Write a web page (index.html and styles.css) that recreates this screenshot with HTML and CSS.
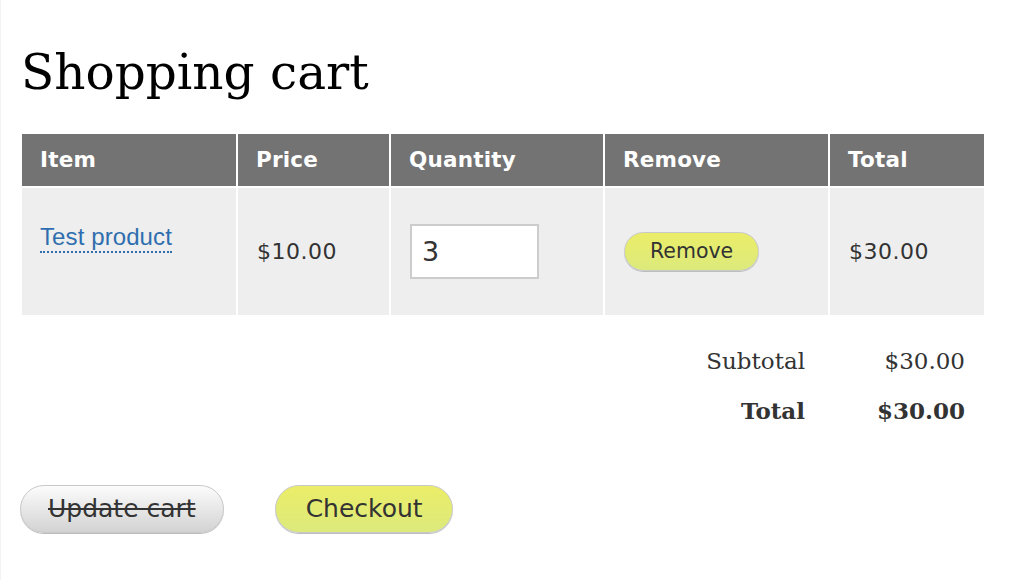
FILE: index.html
```html
<!DOCTYPE html>
<html lang="en">
<head>
<meta charset="utf-8">
<title>Shopping cart</title>
<link rel="stylesheet" href="styles.css">
</head>
<body>
<main class="page">
  <h1 class="title">Shopping cart</h1>
  <table class="cart">
    <colgroup>
      <col class="c-item"><col class="c-price"><col class="c-qty"><col class="c-remove"><col class="c-total">
    </colgroup>
    <thead>
      <tr>
        <th>Item</th>
        <th>Price</th>
        <th>Quantity</th>
        <th>Remove</th>
        <th>Total</th>
      </tr>
    </thead>
    <tbody>
      <tr>
        <td class="cell-item"><a class="product-link" href="#">Test product</a></td>
        <td>$10.00</td>
        <td><input class="qty" type="text" value="3"></td>
        <td><button class="btn btn-yellow btn-small" type="button">Remove</button></td>
        <td>$30.00</td>
      </tr>
    </tbody>
  </table>

  <div class="totals">
    <span class="t-label">Subtotal</span>
    <span class="t-value">$30.00</span>
    <span class="t-label strong">Total</span>
    <span class="t-value strong">$30.00</span>
  </div>

  <div class="actions">
    <button class="btn btn-gray btn-large strike" type="button">Update cart</button>
    <button class="btn btn-yellow btn-large checkout" type="button">Checkout</button>
  </div>
</main>
</body>
</html>
```

FILE: styles.css
```css
html {
  background: #ffffff;
}

body {
  margin: 0;
  border-left: 1px solid #f3f3f3;
  min-height: 580px;
  box-sizing: border-box;
  color: #333333;
  font-family: "DejaVu Sans", sans-serif;
}

.page {
  padding: 45px 30px 0 19px;
}

.title {
  margin: 0 0 33px 1px;
  font-family: "DejaVu Serif", serif;
  font-weight: normal;
  font-size: 48.5px;
  line-height: 54px;
  color: #000000;
  letter-spacing: 0;
}

.cart {
  border-collapse: separate;
  border-spacing: 2px;
  table-layout: fixed;
  width: 966px;
}

.c-item { width: 214px; }
.c-price { width: 151px; }
.c-qty { width: 212px; }
.c-remove { width: 223px; }
.c-total { width: 154px; }

.cart th {
  background: #737373;
  color: #ffffff;
  height: 52px;
  padding: 0 18px;
  text-align: left;
  font-family: "DejaVu Sans", sans-serif;
  font-weight: bold;
  font-size: 21.5px;
  line-height: 24px;
  letter-spacing: 0.2px;
  box-sizing: border-box;
}

.cart td {
  background: #eeeeee;
  height: 127px;
  padding: 0 18px 0 19px;
  vertical-align: middle;
  font-size: 22px;
  letter-spacing: 0.5px;
  color: #333333;
  box-sizing: border-box;
}

.cart td.cell-item {
  vertical-align: top;
  padding-top: 34px;
  padding-left: 18px;
}

.product-link {
  font-family: "Liberation Sans", Arial, sans-serif;
  font-size: 24px;
  line-height: 29px;
  letter-spacing: 0.1px;
  color: #2f6eae;
  text-decoration: none;
  border-bottom: 2px dotted #2f6eae;
  padding-bottom: 1px;
}

.qty {
  display: block;
  box-sizing: border-box;
  width: 129px;
  height: 55px;
  margin: 0;
  padding: 0 10px;
  border: 2px solid #cccccc;
  background: #ffffff;
  font-family: "DejaVu Sans", sans-serif;
  font-size: 27px;
  color: #333333;
  outline: none;
}

.btn {
  display: inline-block;
  box-sizing: border-box;
  margin: 0;
  border: 1px solid #c9c9c9;
  border-radius: 999px;
  font-family: "DejaVu Sans", sans-serif;
  color: #333333;
  cursor: pointer;
  box-shadow: 0 1px 0 #bdbdbd;
}

.btn-yellow {
  background: linear-gradient(#ebed68, #dcea7c);
}

.btn-gray {
  background: linear-gradient(#fcfcfc, #d3d3d3);
}

.btn-small {
  height: 39px;
  padding: 0 25px;
  font-size: 20.5px;
  line-height: 37px;
  letter-spacing: 0;
}

.btn-large {
  height: 48px;
  padding: 0 28px;
  font-size: 25px;
  line-height: 46px;
}

.btn-large.strike {
  padding: 0 27px;
}

.btn-large.checkout {
  padding: 0 29px 0 30px;
}

.strike {
  text-decoration: line-through;
}

.totals {
  display: grid;
  grid-template-columns: auto 102px;
  column-gap: 58px;
  row-gap: 20px;
  justify-content: end;
  box-sizing: border-box;
  margin: 29px 0 0 0;
  padding-right: 21px;
  width: 966px;
  font-family: "DejaVu Serif", serif;
  font-size: 23px;
  line-height: 30px;
  color: #333333;
}

.t-label,
.t-value {
  text-align: right;
}

.strong {
  font-weight: bold;
}

.actions {
  display: flex;
  gap: 51px;
  margin-top: 59px;
  padding-left: 0;
}
```
